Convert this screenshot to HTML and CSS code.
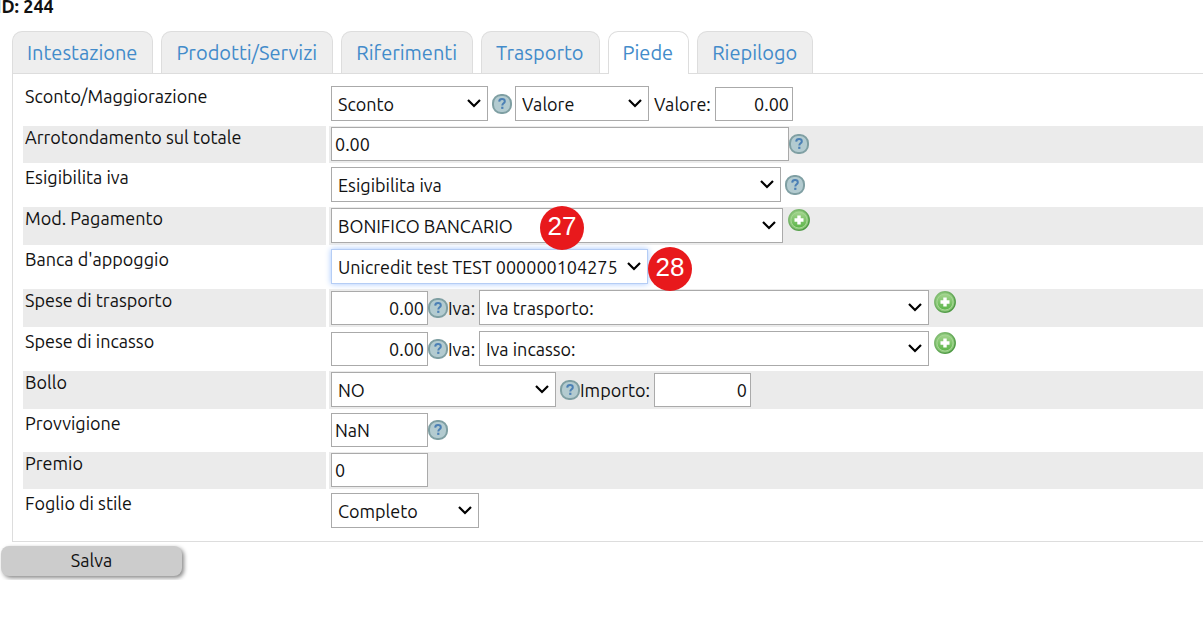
FILE: index.html
```
<!DOCTYPE html>
<html lang="it">
  <head>
    <meta charset="UTF-8" />
    <meta name="viewport" content="width=device-width, initial-scale=1.0" />
    <title>Documento - Piede</title>
    <link rel="stylesheet" href="styles.css">
  </head>
  <body>
    <!-- shared icons -->
    <svg class="sprite" aria-hidden="true">
      <defs>
        <linearGradient id="green" x1="0" y1="0" x2="0" y2="1">
          <stop offset="0" stop-color="#a3d48e" />
          <stop offset="1" stop-color="#5bb548" />
        </linearGradient>
        <linearGradient id="ring" x1="0" y1="0" x2="1" y2="1">
          <stop offset="0" stop-color="#8cc47c" />
          <stop offset="1" stop-color="#43923a" />
        </linearGradient>
      </defs>
      <symbol id="help" viewBox="0 0 20 20">
        <rect x="1" y="1" width="18" height="18" rx="8" fill="#b3cbd0" stroke="#7f9fa3" stroke-width="2" />
        <path d="M7.200 7.600C7.300 5.900 8.500 5.100 10 5.100c1.700 0 2.800.9 2.800 2.300 0 1.900-2.500 2-2.500 4" fill="none" stroke="#4c80b5" stroke-width="2" />
        <rect x="9.200" y="12.700" width="2.200" height="2.200" fill="#4c80b5" />
      </symbol>
      <symbol id="add" viewBox="0 0 22 22">
        <circle cx="11" cy="11" r="10.200" fill="#8dc97a" stroke="url(#ring)" stroke-width="1.500" />
        <circle cx="11" cy="11" r="8" fill="url(#green)" stroke="#a5d694" stroke-width="1" />
        <path d="M11 6.500v9M6.500 11h9" stroke="#fff" stroke-width="3.400" />
      </symbol>
    </svg>

    <h1>ID: 244</h1>

    <nav class="tabs">
      <a href="#intestazione">Intestazione</a>
      <a href="#prodotti">Prodotti/Servizi</a>
      <a href="#riferimenti">Riferimenti</a>
      <a href="#trasporto">Trasporto</a>
      <a href="#piede" class="active">Piede</a>
      <a href="#riepilogo">Riepilogo</a>
    </nav>

    <form id="piede">
      <div class="panel">
        <div class="row">
          <label class="name" for="sconto">Sconto/Maggiorazione</label>
          <div class="field">
            <select id="sconto" class="w-md"><option>Sconto</option></select>
            <svg class="help spaced"><use href="#help" /></svg>
            <select class="w-sm" aria-label="Tipo"><option>Valore</option></select>
            <label class="inline long" for="valore">Valore:</label>
            <input type="text" id="valore" class="w-xs num" value="0.00" />
          </div>
        </div>
        <div class="row">
          <label class="name" for="arrotondamento">Arrotondamento sul totale</label>
          <div class="field">
            <input type="text" id="arrotondamento" class="w-xl" value="0.00" />
            <svg class="help"><use href="#help" /></svg>
          </div>
        </div>
        <div class="row">
          <label class="name" for="esigibilita">Esigibilita iva</label>
          <div class="field">
            <select id="esigibilita" class="w-lg"><option>Esigibilita iva</option></select>
            <svg class="help spaced"><use href="#help" /></svg>
          </div>
        </div>
        <div class="row">
          <label class="name" for="pagamento">Mod. Pagamento</label>
          <div class="field">
            <select id="pagamento" class="w-pag"><option>BONIFICO BANCARIO</option></select>
            <svg class="add"><use href="#add" /></svg>
            <span class="badge pagamento">27</span>
          </div>
        </div>
        <div class="row">
          <label class="name" for="banca">Banca d'appoggio</label>
          <div class="field">
            <select id="banca" class="w-bank focused"><option>Unicredit test TEST 000000104275</option></select>
            <span class="badge banca">28</span>
          </div>
        </div>
        <div class="row">
          <label class="name" for="trasporto">Spese di trasporto</label>
          <div class="field">
            <input type="text" id="trasporto" class="w-in num" value="0.00" />
            <svg class="help"><use href="#help" /></svg>
            <label class="inline" for="iva-trasporto">Iva:</label>
            <select id="iva-trasporto" class="w-lg"><option>Iva trasporto:</option></select>
            <svg class="add"><use href="#add" /></svg>
          </div>
        </div>
        <div class="row">
          <label class="name" for="incasso">Spese di incasso</label>
          <div class="field">
            <input type="text" id="incasso" class="w-in num" value="0.00" />
            <svg class="help"><use href="#help" /></svg>
            <label class="inline" for="iva-incasso">Iva:</label>
            <select id="iva-incasso" class="w-lg"><option>Iva incasso:</option></select>
            <svg class="add"><use href="#add" /></svg>
          </div>
        </div>
        <div class="row">
          <label class="name" for="bollo">Bollo</label>
          <div class="field">
            <select id="bollo" class="w-bollo"><option>NO</option></select>
            <svg class="help before"><use href="#help" /></svg>
            <label class="inline import" for="importo">Importo:</label>
            <input type="text" id="importo" class="w-in num" value="0" />
          </div>
        </div>
        <div class="row">
          <label class="name" for="provvigione">Provvigione</label>
          <div class="field">
            <input type="text" id="provvigione" class="w-in" value="NaN" />
            <svg class="help"><use href="#help" /></svg>
          </div>
        </div>
        <div class="row">
          <label class="name" for="premio">Premio</label>
          <div class="field">
            <input type="text" id="premio" class="w-in" value="0" />
          </div>
        </div>
        <div class="row">
          <label class="name" for="stile">Foglio di stile</label>
          <div class="field">
            <select id="stile" class="w-stile"><option>Completo</option></select>
          </div>
        </div>
      </div>
      <button type="submit">Salva</button>
    </form>
  </body>
</html>
```
FILE: styles.css
```
* {
  box-sizing: border-box;
}
body {
  margin: 0;
  font-family: Ubuntu, "Noto Sans", sans-serif;
  font-size: 18px;
  line-height: 24px;
  color: #111;
  background-color: #fff;
  overflow-x: hidden;
}
.sprite {
  position: absolute;
  width: 0;
  height: 0;
}
h1 {
  margin: -6px 0 0 -4px;
  font-size: 18px;
  font-weight: 600;
  line-height: 24px;
}
.tabs {
  display: flex;
  gap: 8px;
  margin: 13px 0 0 12px;
}
.tabs a {
  height: 42px;
  padding: 0 15px 0 14px;
  border: 1px solid #ddd;
  border-bottom: none;
  border-radius: 10px 10px 0 0;
  background-color: #eee;
  color: #428bca;
  font-size: 20px;
  line-height: 42px;
  text-decoration: none;
}
.tabs a.active {
  height: 43px;
  margin-bottom: -1px;
  background-color: #fff;
  z-index: 1;
}
.panel {
  display: flex;
  flex-direction: column;
  gap: 3px;
  margin-left: 12px;
  padding: 11px 0 11px 10px;
  border: 1px solid #ddd;
  border-right: none;
}
.row {
  display: flex;
  gap: 3px;
}
.name {
  width: 303px;
  padding-left: 2px;
  line-height: 22px;
}
.field {
  position: relative;
  flex: 1;
  display: flex;
  align-items: center;
  padding: 1px 2px 2px;
}
.row:nth-child(even) .name,
.row:nth-child(even) .field {
  background-color: #ebebeb;
}
select,
input {
  height: 34px;
  border: 1px solid #aaa;
  border-radius: 0;
  background-color: #fff;
  color: #111;
  font-family: inherit;
  font-size: 18px;
}
select {
  height: 35px;
  padding: 0 24px 0 6px;
  appearance: none;
  background-image: url("data:image/svg+xml,%3Csvg xmlns='http://www.w3.org/2000/svg' width='14' height='9' viewBox='0 0 14 9'%3E%3Cpath d='M1 1l6 6 6-6' fill='none' stroke='%23000' stroke-width='2.2'/%3E%3C/svg%3E");
  background-repeat: no-repeat;
  background-position: right 6px center;
}
input {
  padding: 1px 3px;
}
.num {
  text-align: right;
}
.focused {
  border-color: #b5cdf5;
  box-shadow: 0 0 6px #a5c7fe;
}
.w-xs {
  width: 78px;
}
.w-in {
  width: 97px;
}
.w-sm {
  width: 134px;
}
.w-stile {
  width: 148px;
}
.w-md {
  width: 157px;
}
.w-bollo {
  width: 225px;
}
.w-bank {
  width: 317px;
}
.w-lg {
  width: 450px;
}
.w-pag {
  width: 452px;
}
.w-xl {
  width: 458px;
}
.inline {
  width: 31px;
  white-space: nowrap;
}
.inline.long {
  width: 61px;
  margin-left: 5px;
}
.inline.import {
  width: 74px;
}
.help {
  width: 20px;
  height: 20px;
}
.help.spaced {
  margin: 0 3px 0 4px;
}
.help.before {
  margin-left: 4px;
}
.add {
  align-self: flex-start;
  width: 22px;
  height: 22px;
  margin: 1px 0 0 5px;
}
.badge {
  position: absolute;
  top: -1px;
  width: 44px;
  height: 44px;
  border-radius: 50%;
  background-color: #e8191c;
  color: #fff;
  font-family: "Liberation Sans", Arial, sans-serif;
  font-size: 26px;
  line-height: 40px;
  text-align: center;
  z-index: 1;
}
.badge.pagamento {
  left: 211px;
}
.badge.banca {
  left: 319px;
}
button {
  display: block;
  width: 181px;
  height: 30px;
  margin: 4px 1px;
  padding: 0 0 2px;
  border: none;
  border-radius: 8px;
  background-color: #ccc;
  box-shadow: 2px 2px 4px #888;
  color: #111;
  font-family: inherit;
  font-size: 18px;
}
```
